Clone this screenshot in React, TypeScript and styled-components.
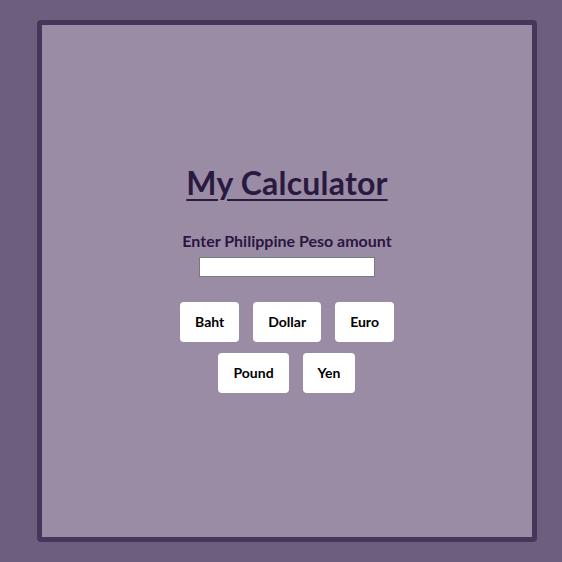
import React from "react";
import styled, { createGlobalStyle } from "styled-components";

const Global = createGlobalStyle`
  html, body { margin: 0; padding: 0; background: #6c5e7c; }
  body { font-family: Lato, "Noto Sans", sans-serif; }
`;

const Page = styled.div`
  width: 562px;
  height: 562px;
  box-sizing: border-box;
  padding: 20px 25px 20px 37px;
`;

const Card = styled.div`
  box-sizing: border-box;
  width: 500px;
  height: 522px;
  background: #9b8ca6;
  border: 5px solid #45365a;
  border-radius: 4px;
  display: flex;
  flex-direction: column;
  align-items: center;
  justify-content: center;
  padding-bottom: 7px;
`;

const Title = styled.h1`
  margin: 0 0 29px;
  font-size: 32px;
  font-weight: 700;
  color: #2a1a40;
  text-decoration: underline;
  text-decoration-thickness: 2px;
  text-underline-offset: 4px;
  letter-spacing: 0.2px;
`;

const Label = styled.label`
  font-size: 16px;
  font-weight: 700;
  color: #2a1640;
  margin-bottom: 7px;
`;

const Input = styled.input`
  box-sizing: border-box;
  width: 176px;
  height: 20px;
  border: 1px solid #7a7a7a;
  background: #fff;
  margin: 0 0 25px;
  padding: 0 2px;
`;

const Rows = styled.div`
  display: flex;
  flex-direction: column;
  align-items: center;
  gap: 11px;
`;

const Row = styled.div`
  display: flex;
  gap: 14px;
`;

const Button = styled.button`
  height: 40px;
  padding: 0 15px;
  border: none;
  border-radius: 4px;
  background: #fff;
  color: #000;
  font-family: Lato, "Noto Sans", sans-serif;
  font-size: 14px;
  font-weight: 700;
  cursor: pointer;
`;

export default function App() {
  return (
    <>
      <Global />
      <Page>
        <Card>
          <Title>My Calculator</Title>
          <Label>Enter Philippine Peso amount</Label>
          <Input type="text" />
          <Rows>
            <Row>
              <Button>Baht</Button>
              <Button>Dollar</Button>
              <Button>Euro</Button>
            </Row>
            <Row>
              <Button>Pound</Button>
              <Button>Yen</Button>
            </Row>
          </Rows>
        </Card>
      </Page>
    </>
  );
}
